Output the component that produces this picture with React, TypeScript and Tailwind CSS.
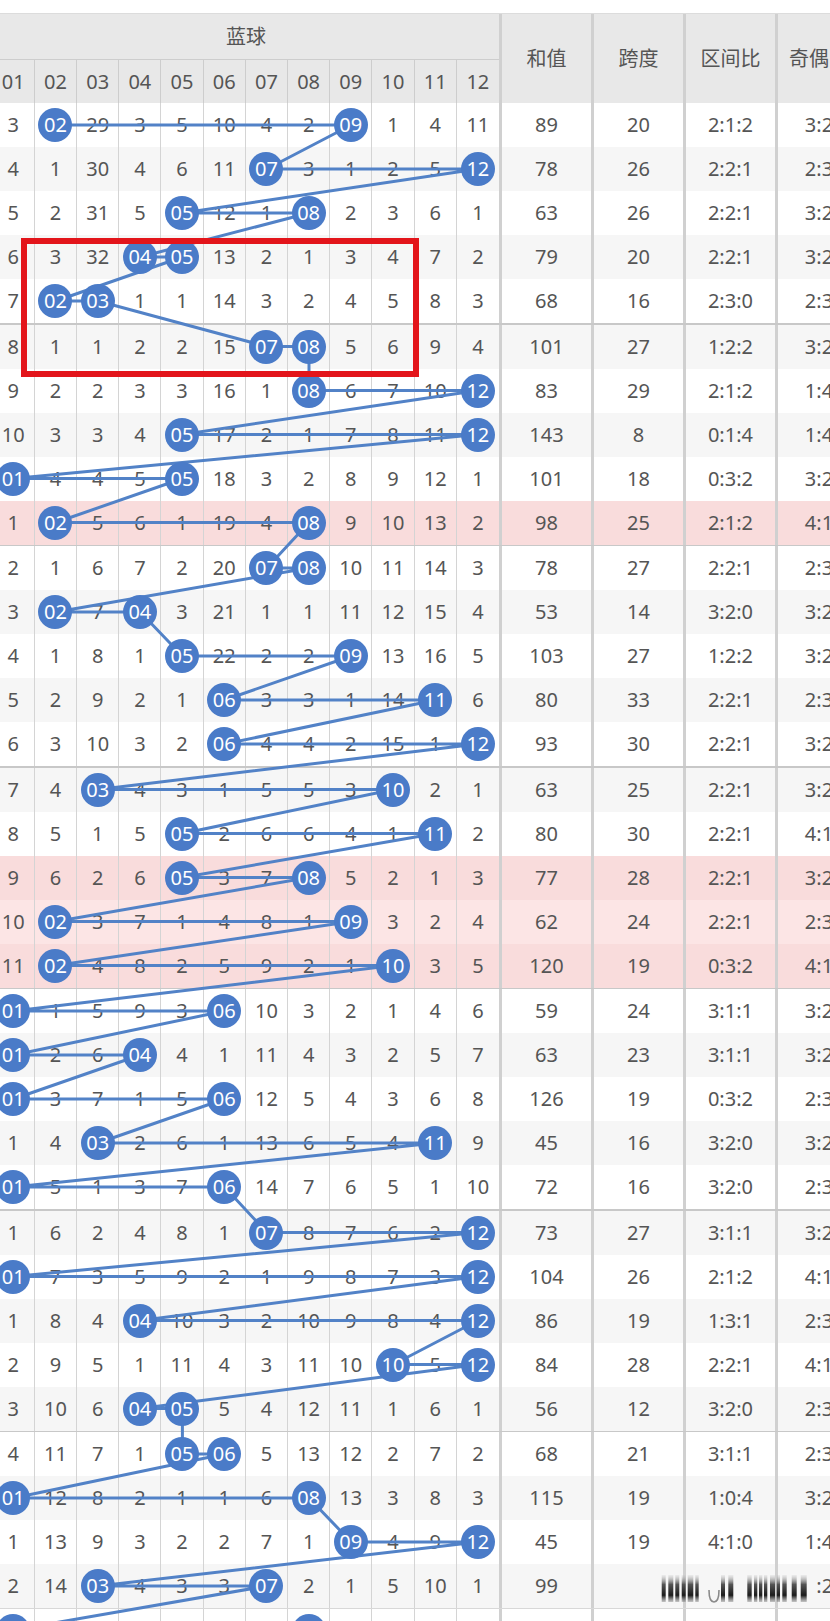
import React from "react";

const RAW: string[] = [
  "3 B 29 3 5 10 4 2 B 1 4 11|89|20|2:1:2|3:2",
  "4 1 30 4 6 11 B 3 1 2 5 B|78|26|2:2:1|2:3",
  "5 2 31 5 B 12 1 B 2 3 6 1|63|26|2:2:1|3:2",
  "6 3 32 B B 13 2 1 3 4 7 2|79|20|2:2:1|3:2",
  "7 B B 1 1 14 3 2 4 5 8 3|68|16|2:3:0|2:3",
  "8 1 1 2 2 15 B B 5 6 9 4|101|27|1:2:2|3:2",
  "9 2 2 3 3 16 1 B 6 7 10 B|83|29|2:1:2|1:4",
  "10 3 3 4 B 17 2 1 7 8 11 B|143|8|0:1:4|1:4",
  "B 4 4 5 B 18 3 2 8 9 12 1|101|18|0:3:2|3:2",
  "1 B 5 6 1 19 4 B 9 10 13 2|98|25|2:1:2|4:1|p",
  "2 1 6 7 2 20 B B 10 11 14 3|78|27|2:2:1|2:3",
  "3 B 7 B 3 21 1 1 11 12 15 4|53|14|3:2:0|3:2",
  "4 1 8 1 B 22 2 2 B 13 16 5|103|27|1:2:2|3:2",
  "5 2 9 2 1 B 3 3 1 14 B 6|80|33|2:2:1|2:3",
  "6 3 10 3 2 B 4 4 2 15 1 B|93|30|2:2:1|3:2",
  "7 4 B 4 3 1 5 5 3 B 2 1|63|25|2:2:1|3:2",
  "8 5 1 5 B 2 6 6 4 1 B 2|80|30|2:2:1|4:1",
  "9 6 2 6 B 3 7 B 5 2 1 3|77|28|2:2:1|3:2|p",
  "10 B 3 7 1 4 8 1 B 3 2 4|62|24|2:2:1|2:3|p",
  "11 B 4 8 2 5 9 2 1 B 3 5|120|19|0:3:2|4:1|p",
  "B 1 5 9 3 B 10 3 2 1 4 6|59|24|3:1:1|3:2",
  "B 2 6 B 4 1 11 4 3 2 5 7|63|23|3:1:1|3:2",
  "B 3 7 1 5 B 12 5 4 3 6 8|126|19|0:3:2|2:3",
  "1 4 B 2 6 1 13 6 5 4 B 9|45|16|3:2:0|3:2",
  "B 5 1 3 7 B 14 7 6 5 1 10|72|16|3:2:0|2:3",
  "1 6 2 4 8 1 B 8 7 6 2 B|73|27|3:1:1|3:2",
  "B 7 3 5 9 2 1 9 8 7 3 B|104|26|2:1:2|4:1",
  "1 8 4 B 10 3 2 10 9 8 4 B|86|19|1:3:1|2:3",
  "2 9 5 1 11 4 3 11 10 B 5 B|84|28|2:2:1|4:1",
  "3 10 6 B B 5 4 12 11 1 6 1|56|12|3:2:0|2:3",
  "4 11 7 1 B B 5 13 12 2 7 2|68|21|3:1:1|2:3",
  "B 12 8 2 1 1 6 B 13 3 8 3|115|19|1:0:4|3:2",
  "1 13 9 3 2 2 7 1 B 4 9 B|45|19|4:1:0|1:4",
  "2 14 B 4 3 3 B 2 1 5 10 1|99|||3:2|w",
  "B 15 1 5 4 4 1 B 2 6 11 2|70|20|2:2:1|3:2",
];

type RowData = {
  cells: string[];
  sum: string;
  span: string;
  zone: string;
  odd: string;
  pink: boolean;
  wm: boolean;
};

const rows: RowData[] = RAW.map((s) => {
  const p = s.split("|");
  return {
    cells: p[0].split(" "),
    sum: p[1],
    span: p[2],
    zone: p[3],
    odd: p[4],
    pink: p[5] === "p",
    wm: p[5] === "w",
  };
});

const pad = (n: number) => (n < 10 ? "0" + n : "" + n);
const ROW_H = 44;
const SEP = 1.5;
const CW = 42.2;
const cyOf = (i: number) => i * ROW_H + Math.floor(i / 5) * SEP + ROW_H / 2;
const cxOf = (k: number) => k * CW + 20.6;

const points: string[] = [];
rows.forEach((r, i) =>
  r.cells.forEach((c, k) => {
    if (c === "B") points.push(`${cxOf(k).toFixed(1)},${cyOf(i).toFixed(1)}`);
  })
);
const bodyH = rows.length * ROW_H + 6 * SEP;

const WM_BARS: [number, number][] = [
  [3.7, 4], [10.3, 5], [17.3, 4], [23.7, 4], [29.7, 5.6], [37.3, 3.4],
  [63, 4], [70.3, 5], [89.3, 4.4], [96, 3.3], [101, 3.3], [106, 3.3],
  [112, 5], [118.7, 3.3], [124.3, 4.4], [133.7, 5], [142.7, 6],
];

function RightCell({ children }: { children?: React.ReactNode }) {
  return (
    <div className="w-[92px] shrink-0 h-full border-l-[3px] border-[#d0d0d0] flex items-center justify-center">
      {children}
    </div>
  );
}

function LastCell({ children }: { children?: React.ReactNode }) {
  return (
    <div className="w-[85px] shrink-0 h-full border-l-[3px] border-[#d0d0d0] flex items-center justify-center whitespace-nowrap">
      {children}
    </div>
  );
}

function Row({ r, i }: { r: RowData; i: number }) {
  const even = i % 2 === 1;
  const bg = r.pink
    ? even
      ? "bg-[#f9dcdc]"
      : "bg-[#fce5e5]"
    : even
    ? "bg-[#f6f6f6]"
    : "bg-white";
  const last = i === rows.length - 1;
  return (
    <div className={`flex h-[44px] ${bg} ${last ? "border-t border-[#d8d8d8]" : ""}`}>
      {r.cells.map((c, k) => (
        <div
          key={k}
          className={`w-[42.2px] shrink-0 h-full flex items-center justify-center ${
            k < 11 ? "border-r border-[#d4d4d4]" : ""
          }`}
        >
          {c === "B" ? (
            <span className="relative z-20 w-[34px] h-[34px] rounded-full bg-[#4a7bc8] text-white flex items-center justify-center leading-none">
              {pad(k + 1)}
            </span>
          ) : (
            c
          )}
        </div>
      ))}
      <RightCell>{r.sum}</RightCell>
      <RightCell>{r.span}</RightCell>
      <RightCell>{r.zone}</RightCell>
      <LastCell>
        {r.wm ? (
          <span>
            <span className="text-transparent">3</span>:2
          </span>
        ) : (
          r.odd
        )}
      </LastCell>
    </div>
  );
}

export default function App() {
  return (
    <div className="relative w-[830px] h-[1621px] overflow-hidden bg-white text-[20px] leading-none text-[#555555] font-['Noto_Sans','Noto_Sans_CJK_SC',sans-serif]">
      <div className="h-[13px] bg-white" />
      <div className="relative ml-[-7.3px] w-[880px]">
        {/* header */}
        <div className="flex h-[90px] border-t border-[#dcdcdc] bg-[#e8e8e8]">
          <div className="w-[506.4px] shrink-0 flex flex-col">
            <div className="h-[46px] border-b border-[#cdcdcd] flex items-center justify-center">
              蓝球
            </div>
            <div className="flex flex-1">
              {Array.from({ length: 12 }, (_, k) => (
                <div
                  key={k}
                  className={`w-[42.2px] shrink-0 h-full flex items-center justify-center ${
                    k < 11 ? "border-r border-[#cdcdcd]" : ""
                  }`}
                >
                  {pad(k + 1)}
                </div>
              ))}
            </div>
          </div>
          <RightCell>和值</RightCell>
          <RightCell>跨度</RightCell>
          <RightCell>区间比</RightCell>
          <LastCell>奇偶比</LastCell>
        </div>
        {/* body */}
        <div className="relative">
          {rows.map((r, i) => (
            <React.Fragment key={i}>
              {i > 0 && i % 5 === 0 && <div className="h-[1.5px] bg-[#c8c8c8]" />}
              <Row r={r} i={i} />
            </React.Fragment>
          ))}
          <svg
            className="absolute left-0 top-0 z-10 pointer-events-none"
            width={880}
            height={bodyH}
            viewBox={`0 0 880 ${bodyH}`}
          >
            <polyline
              points={points.join(" ")}
              fill="none"
              stroke="#5282c7"
              strokeWidth={3}
              strokeLinejoin="round"
            />
          </svg>
        </div>
      </div>
      {/* red highlight box */}
      <div className="absolute left-[20.7px] top-[237.7px] w-[398.6px] h-[139px] border-[6px] border-[#e3151b] z-30" />
      {/* watermark */}
      <svg
        className="absolute left-[658px] top-[1573px] z-40"
        width={152}
        height={32}
        viewBox="0 0 152 32"
      >
        <defs>
          <linearGradient id="wmg" x1="0" y1="0" x2="0" y2="1">
            <stop offset="0" stopColor="#bdbdbd" stopOpacity="0.2" />
            <stop offset="0.35" stopColor="#555555" />
            <stop offset="0.75" stopColor="#1a1a1a" />
            <stop offset="1" stopColor="#777777" stopOpacity="0.4" />
          </linearGradient>
        </defs>
        {WM_BARS.map(([x, w], j) => (
          <rect key={j} x={x} y={2} width={w} height={27} fill="url(#wmg)" />
        ))}
        <path d="M51 17 Q51 29 56 29 Q61 29 61 17" fill="none" stroke="#8a8a8a" strokeWidth={1.6} />
      </svg>
    </div>
  );
}
